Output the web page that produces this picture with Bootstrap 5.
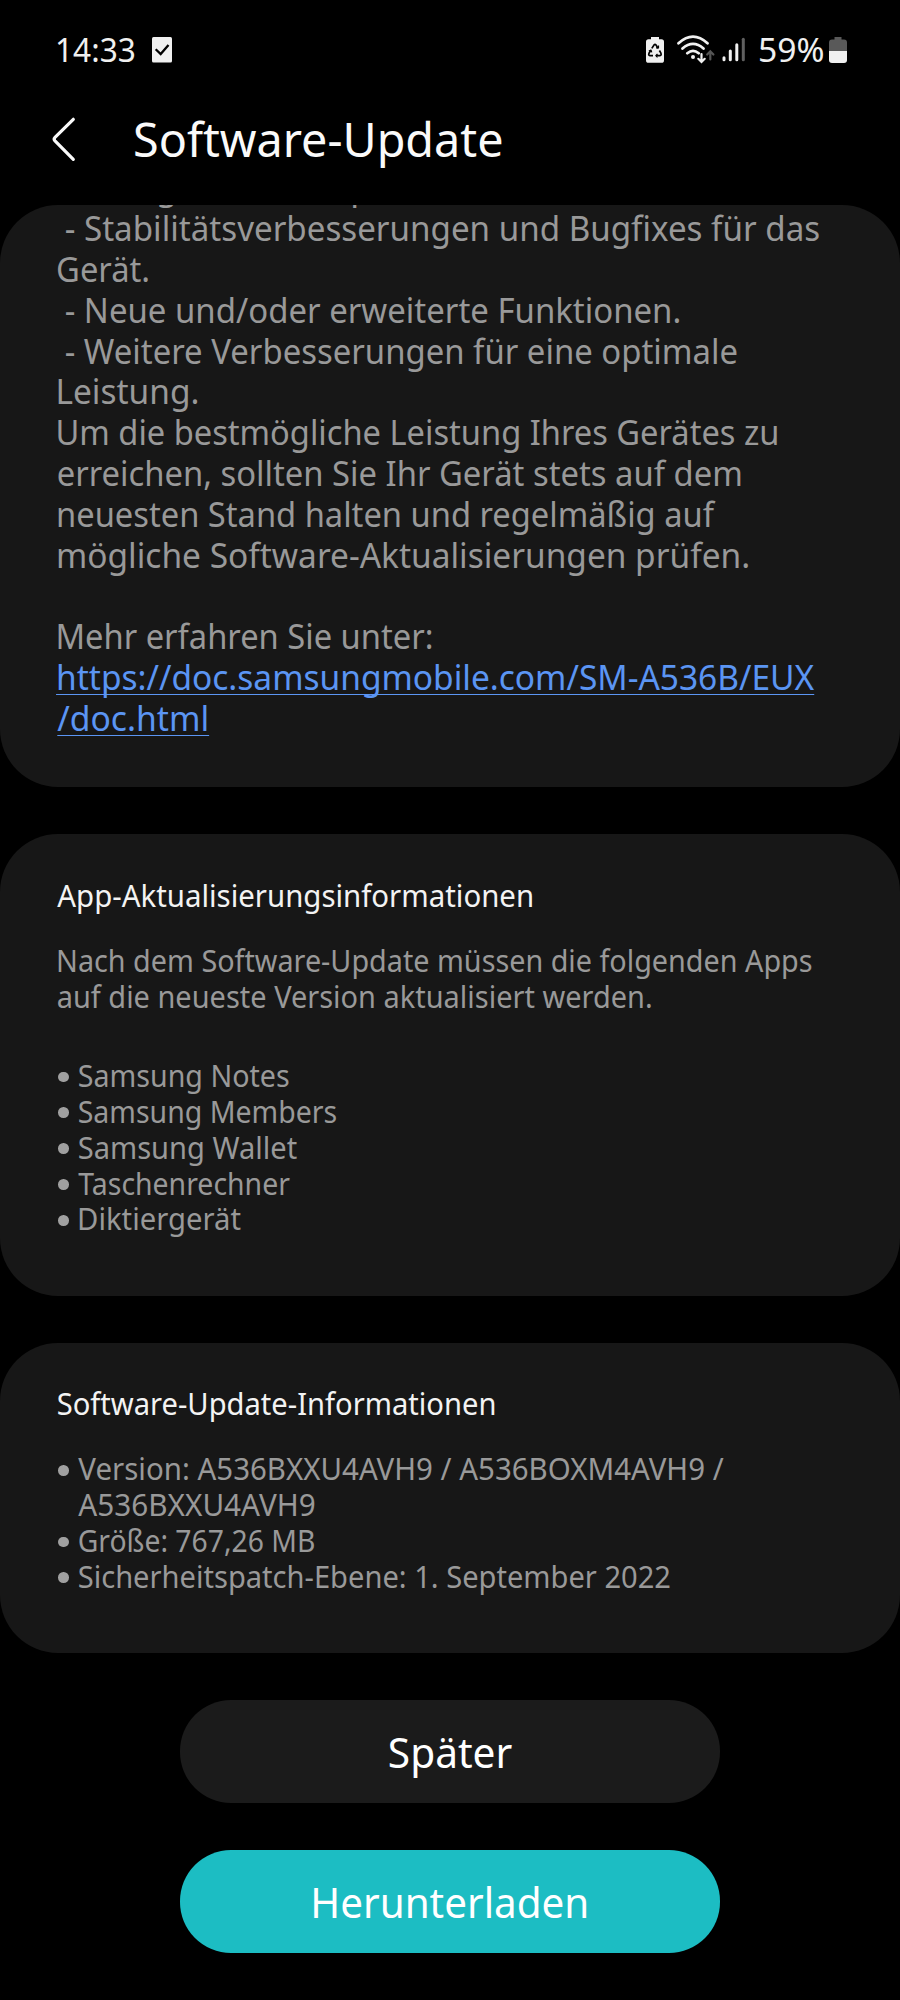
<!DOCTYPE html>
<html lang="de">
<head>
<meta charset="utf-8">
<meta name="viewport" content="width=device-width, initial-scale=1">
<title>Software-Update</title>
<link href="https://cdn.jsdelivr.net/npm/bootstrap@5.3.0/dist/css/bootstrap.min.css" rel="stylesheet">
<style>
  body { background: #000; color: #fafafa; font-family: "Noto Sans", "Open Sans", sans-serif; height: 2000px; overflow: hidden; }
  /* one text line, fitted to the width in data-w */
  .ln { display: block; width: max-content; white-space: pre; transform-origin: 0 50%; }
  .status-bar { height: 100px; padding: 0 53px 0 56px; }
  .status-bar .ln { font-size: 33px; line-height: 50px; color: #f0f0f0; }
  .clock { width: 96px; }
  .percent { width: 70px; }
  .app-bar { height: 105px; padding-left: 51px; }
  .app-bar h1 { font-size: 47px; line-height: 64px; font-weight: 400; margin: 7px 0 0 57px; }
  .panel { background: #171717; border: 0; border-radius: 58px; overflow: hidden; padding: 0 57px; color: #999; }
  .panel-notes { height: 581.7px; margin-bottom: 47.3px; font-size: 34.5px; line-height: 40.82px; }
  .notes-text { margin-top: -37.6px; }
  .notes-text .dash { margin-left: 8px; }
  .notes-text a { color: #5b95f3; text-decoration: underline; text-decoration-thickness: 1px; text-underline-offset: 4px; text-decoration-skip-ink: none; }
  .cut-line { height: 40.82px; padding-left: 99px; gap: 173px; }
  .panel-info { font-size: 30.5px; line-height: 35.83px; }
  .panel-apps { height: 462px; margin-bottom: 46.7px; padding-top: 44.2px; }
  .panel-version { height: 310.5px; margin-bottom: 47px; padding-top: 43.6px; }
  .panel h2 { font-size: inherit; line-height: inherit; font-weight: 400; color: #f3f3f3; margin: 0 0 29.4px; }
  .app-list { margin-top: 43px; }
  .panel li { position: relative; padding-left: 20.7px; }
  .panel li::before { content: ""; position: absolute; left: 1.3px; top: 13.5px; width: 10.7px; height: 10.7px; border-radius: 50%; background: #a0a0a0; }
  .action { width: 540px; height: 103px; border: 0; border-radius: 51px; color: #fff; font-size: 42.5px; line-height: 58px; padding: 1px 0 0; --bs-btn-color: #fff; }
  .action-later { background: #1b1b1b; margin-bottom: 47px; }
  .action-load { background: #1cbdc3; }
  .fit-mid { margin: 0 auto; }
</style>
</head>
<body>
<div class="status-bar d-flex align-items-center">
  <div class="clock"><span class="ln" data-w="77">14:33</span></div>
  <svg width="20" height="26" viewBox="0 0 20 26"><rect width="20" height="25.500" rx="1.500" fill="#f0f0f0"/><path d="M3.700 12.200l5 4.900 7.800-9" fill="none" stroke="#000" stroke-width="2.300"/></svg>
  <div class="ms-auto d-flex align-items-center">
    <svg width="114" height="30" viewBox="645 36 114 30" fill="none" stroke-linecap="round">
      <path d="M651 38h8v2.200h2.500q2.500 0 2.500 2.500v18.500q0 2.600-2.500 2.600h-13q-2.500 0-2.500-2.600V42.700q0-2.500 2.500-2.500h2.500z" fill="#f0f0f0"/>
      <g stroke="#000" stroke-width="1.700" stroke-linecap="butt" stroke-linejoin="round">
        <path d="M651.800 49.400l2.400-3.600q.8-1 1.600 0l2.300 3.500M659.400 51.500l1.500 2.700q.8 2.300-1 2.500h-3.700M653 56.700h-3q-1.900-.3-1-2.400l1.800-3"/>
        <path d="M656 48.900h2.500v-2.500M657.500 55l-1.700 1.700 1.700 1.700M648.800 52l2.200-.9.800 2.300" stroke-width="1.200"/>
      </g>
      <g stroke="#f0f0f0" stroke-width="2.700">
        <path d="M678.500 44.300q14.500-13.200 29 0M682.500 49.500q10.500-9.200 21 0M687.300 54.200q5.700-4.800 11.400 0"/>
      </g>
      <circle cx="693" cy="58" r="2" fill="#f0f0f0"/>
      <path d="M701.500 55v7.500M698.300 59.800l3.200 3.200 3.200-3.200" stroke="#f0f0f0" stroke-width="2.200"/>
      <path d="M710.300 60.500v-7.500M707.200 55.500l3.100-3.200 3.100 3.200" stroke="#555" stroke-width="2.200"/>
      <path d="M724 58.700v2M730.300 52v8.700M736.800 45.700v15" stroke="#f0f0f0" stroke-width="3"/>
      <path d="M743.300 40.300v20.400" stroke="#606060" stroke-width="3"/>
    </svg>
    <div class="percent"><span class="ln" data-w="63">59%</span></div>
    <svg width="18" height="28" viewBox="829 36 18 28"><path d="M834.500 37h7v2.500h2.500q3 0 3 3V51h-18v-8.500q0-3 3-3h2.500z" fill="#595959"/><path d="M829 51h18v9q0 3-3 3h-12q-3 0-3-3z" fill="#f0f0f0"/></svg>
  </div>
</div>

<header class="app-bar d-flex align-items-start">
  <svg width="26" height="46" viewBox="51 116 26 46" class="mt-3 flex-shrink-0"><path d="M73.300 119.300L55 137.300q-1.700 1.700 0 3.500l18.300 18.500" fill="none" stroke="#fafafa" stroke-width="3.200" stroke-linecap="round" stroke-linejoin="round"/></svg>
  <h1><span class="ln" data-w="367">Software-Update</span></h1>
</header>

<main>
  <section class="card panel panel-notes">
    <div class="notes-text">
      <div class="cut-line d-flex" aria-hidden="true"><span>g</span><span>p</span></div>
      <span class="ln dash" data-w="753">- Stabilitätsverbesserungen und Bugfixes für das</span>
      <span class="ln" data-w="90">Gerät.</span>
      <span class="ln dash" data-w="613.500">- Neue und/oder erweiterte Funktionen.</span>
      <span class="ln dash" data-w="671">- Weitere Verbesserungen für eine optimale</span>
      <span class="ln" data-w="139">Leistung.</span>
      <span class="ln" data-w="719">Um die bestmögliche Leistung Ihres Gerätes zu</span>
      <span class="ln" data-w="683">erreichen, sollten Sie Ihr Gerät stets auf dem</span>
      <span class="ln" data-w="658">neuesten Stand halten und regelmäßig auf</span>
      <span class="ln" data-w="690">mögliche Software-Aktualisierungen prüfen.</span>
      <br>
      <span class="ln" data-w="373">Mehr erfahren Sie unter:</span>
      <a href="#"><span class="ln" data-w="757">https://doc.samsungmobile.com/SM-A536B/EUX</span><span class="ln" data-w="149">/doc.html</span></a>
    </div>
  </section>

  <section class="card panel panel-info panel-apps">
    <h2><span class="ln" data-w="475">App-Aktualisierungsinformationen</span></h2>
    <div>
      <span class="ln" data-w="754">Nach dem Software-Update müssen die folgenden Apps</span>
      <span class="ln" data-w="593">auf die neueste Version aktualisiert werden.</span>
    </div>
    <ul class="list-unstyled mb-0 app-list">
      <li><span class="ln" data-w="210.500">Samsung Notes</span></li>
      <li><span class="ln" data-w="258">Samsung Members</span></li>
      <li><span class="ln" data-w="218.500">Samsung Wallet</span></li>
      <li><span class="ln" data-w="212">Taschenrechner</span></li>
      <li><span class="ln" data-w="162">Diktiergerät</span></li>
    </ul>
  </section>

  <section class="card panel panel-info panel-version">
    <h2><span class="ln" data-w="437">Software-Update-Informationen</span></h2>
    <ul class="list-unstyled mb-0">
      <li><span class="ln" data-w="646">Version: A536BXXU4AVH9 / A536BOXM4AVH9 /</span><span class="ln" data-w="236">A536BXXU4AVH9</span></li>
      <li><span class="ln" data-w="236">Größe: 767,26 MB</span></li>
      <li><span class="ln" data-w="591">Sicherheitspatch-Ebene: 1. September 2022</span></li>
    </ul>
  </section>

  <div class="d-flex flex-column align-items-center">
    <button type="button" class="btn action action-later"><span class="ln fit-mid" data-w="122">Später</span></button>
    <button type="button" class="btn action action-load"><span class="ln fit-mid" data-w="272">Herunterladen</span></button>
  </div>
</main>

<script src="https://cdn.jsdelivr.net/npm/bootstrap@5.3.0/dist/js/bootstrap.bundle.min.js"></script>
<script>
  // Scale every line horizontally so that its glyphs span exactly data-w pixels.
  const pen = document.createElement('canvas').getContext('2d');
  document.querySelectorAll('.ln').forEach(line => {
    const css = getComputedStyle(line);
    pen.font = `${css.fontWeight} ${css.fontSize} "Noto Sans"`;
    const m = pen.measureText(line.textContent);
    const k = line.dataset.w / (m.actualBoundingBoxLeft + m.actualBoundingBoxRight);
    if (line.classList.contains('fit-mid')) {
      line.style.transformOrigin = '50% 50%';
      line.style.transform = `scaleX(${k})`;
    } else {
      line.style.transform = `translateX(${m.actualBoundingBoxLeft * k * 0.65 + 0.3}px) scaleX(${k})`;
    }
  });
</script>
</body>
</html>
